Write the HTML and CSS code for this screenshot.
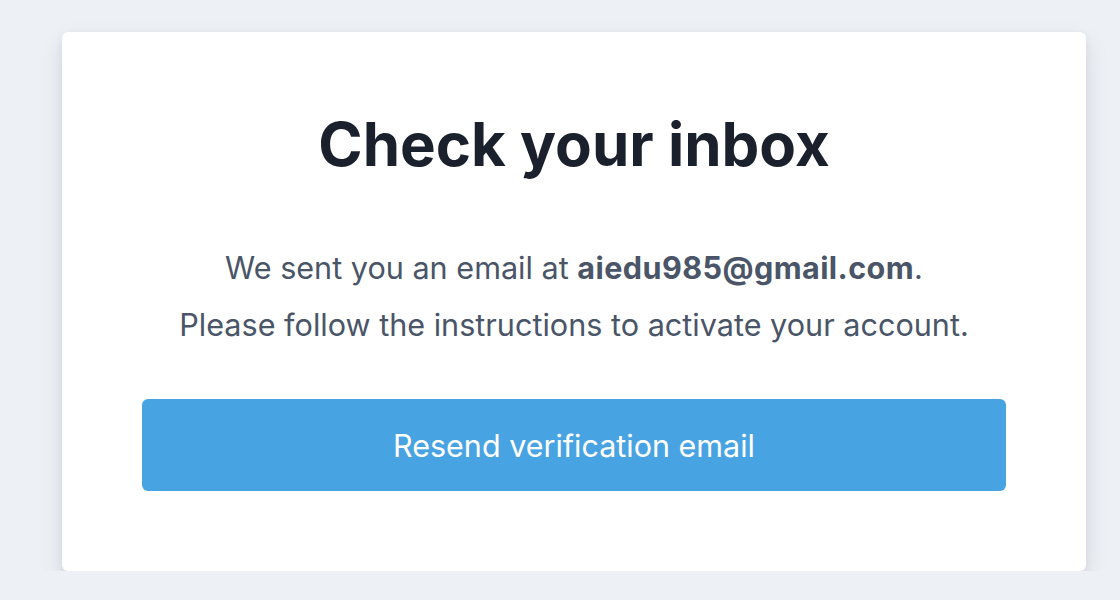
FILE: index.html
```html
<!DOCTYPE html>
<html>
<head>
<meta charset="utf-8">
<link rel="stylesheet" href="styles.css">
</head>
<body>
<main class="page">
  <section class="card">
    <h1 class="title">Check your inbox</h1>
    <p class="text">We sent you an email at <strong>aiedu985@gmail.com</strong>.</p>
    <p class="text">Please follow the instructions to activate your account.</p>
    <button class="btn" type="button">Resend verification email</button>
  </section>
</main>
</body>
</html>
```
FILE: styles.css
```css
html, body {
  margin: 0;
  padding: 0;
  background: #edf0f5;
  font-family: Inter, "Noto Sans", sans-serif;
}
.page {
  padding: 32px 34px 0 62px;
}
.card {
  box-sizing: border-box;
  width: 1024px;
  background: #ffffff;
  border-radius: 6px;
  box-shadow: 0 10px 25px rgba(30, 40, 60, 0.10), 0 3px 8px rgba(30, 40, 60, 0.06);
  padding: 76px 80px 80px;
  display: flex;
  flex-direction: column;
  align-items: center;
}
.title {
  margin: 0 0 59px;
  font-size: 60px;
  line-height: 72px;
  font-weight: 700;
  color: #1a202c;
}
.text {
  margin: 0;
  font-size: 30.6px;
  line-height: 57px;
  color: #4a5568;
  text-align: center;
}
.text strong {
  font-weight: 700;
  letter-spacing: 0.4px;
}
.btn {
  margin-top: 46px;
  width: 100%;
  height: 92px;
  border: none;
  border-radius: 6px;
  background: #48a3e2;
  color: #ffffff;
  font-family: Inter, "Noto Sans", sans-serif;
  font-size: 30.5px;
  cursor: pointer;
}
```
